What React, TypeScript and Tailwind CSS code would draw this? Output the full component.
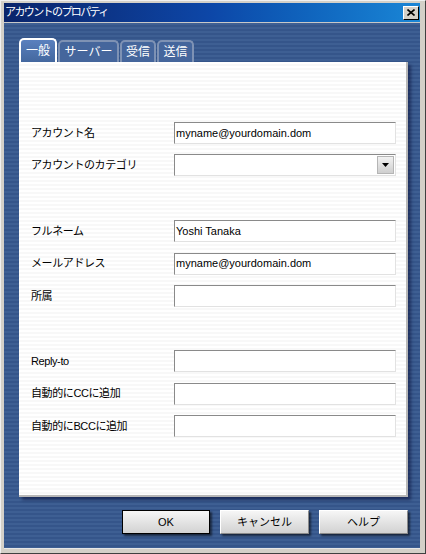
import React from "react";

const jp = "font-['Liberation_Sans','Noto_Sans_CJK_JP',sans-serif]";

function Field({ label, value, select }: { label: string; value?: string; select?: boolean }) {
  return (
    <div className="flex items-center h-[22px]">
      <div className={`w-[143px] text-[11px] tracking-[-0.4px] text-black ${jp}`}>{label}</div>
      <div className="relative w-[222px] h-[22px] bg-white border-t border-l border-t-[#8a8a8a] border-l-[#8a8a8a] border-b border-r border-b-[#e2e2e2] border-r-[#e2e2e2] flex items-center pl-[1px]">
        <span className="font-['Liberation_Sans',sans-serif] text-[11px] text-black">{value}</span>
        {select && (
          <div className="absolute right-[1px] top-[1px] w-[17px] h-[18px] bg-gradient-to-b from-[#f2f2f2] to-[#cfcfcf] border border-[#b5b5b5] flex items-center justify-center">
            <svg width="7" height="4" viewBox="0 0 7 4">
              <path d="M0 0h7L3.5 4z" fill="#000" />
            </svg>
          </div>
        )}
      </div>
    </div>
  );
}

function Btn({ label, def }: { label: string; def?: boolean }) {
  return (
    <div
      className={`h-[24px] flex items-center justify-center bg-gradient-to-b from-[#f6f6f6] to-[#d2d2d2] text-[11px] text-black ${jp} shadow-[2px_2px_2px_rgba(0,0,0,0.55)] ${
        def ? "border border-black" : "border border-t-white border-l-white border-b-[#8a8a8a] border-r-[#8a8a8a]"
      }`}
    >
      {label}
    </div>
  );
}

export default function App() {
  return (
    <div className="w-[426px] h-[554px] bg-[#d4d0c8] border-l border-t border-l-[#f0f0f0] border-t-[#f0f0f0] border-r border-b border-r-[#404040] border-b-[#404040] pl-[3px] pr-[5px] pt-[2px] pb-[4px] flex flex-col">
      <div className="h-[19px] shrink-0 bg-gradient-to-r from-[#0a246a] via-[#0d47a8] to-[#1a86d6] flex items-center justify-between pl-[1px] pr-[1px]">
        <span className={`text-white text-[11px] tracking-[-1.6px] ${jp}`}>アカウントのプロパティ</span>
        <div className="w-[16px] h-[14px] bg-[#d4d0c8] border border-t-white border-l-white border-b-black border-r-black flex items-center justify-center">
          <svg width="8" height="7" viewBox="0 0 8 7">
            <path d="M0.5 0.5l7 6M7.5 0.5l-7 6" stroke="#000" strokeWidth="1.6" />
          </svg>
        </div>
      </div>
      <div className="h-[1px] shrink-0 bg-[#c8c8c8]" />
      <div className="flex-1 flex flex-col pl-[15px] pr-[12px] pt-[15px] bg-[repeating-linear-gradient(180deg,#3e5f93_0px,#3e5f93_2px,#35558a_2px,#35558a_4px)] border-b border-[#e8e8e8]">
        <div className={`flex items-end h-[24px] text-white text-[12px] ${jp}`}>
          <div className="w-[38px] h-[24px] rounded-t-[5px] border-2 border-b-0 border-white bg-gradient-to-b from-[#5a80be] to-[#44689f] flex items-center justify-center">一般</div>
          <div className="ml-[1px] w-[61px] h-[22px] rounded-t-[5px] border-2 border-b-0 border-[#7e92b4] bg-[#45669c] flex items-center justify-center">サーバー</div>
          <div className="ml-[1px] w-[36px] h-[22px] rounded-t-[5px] border-2 border-b-0 border-[#7e92b4] bg-[#45669c] flex items-center justify-center">受信</div>
          <div className="ml-[1px] w-[37px] h-[22px] rounded-t-[5px] border-2 border-b-0 border-[#7e92b4] bg-[#45669c] flex items-center justify-center">送信</div>
        </div>
        <div className="h-[435px] w-[389px] pl-[12px] pt-[60px] bg-[repeating-linear-gradient(180deg,#ffffff_0px,#ffffff_2px,#f8f8f8_2px,#f8f8f8_4px)] border-r-2 border-b-2 border-[#b8b8b8] shadow-[3px_3px_3px_rgba(0,0,40,0.45)] flex flex-col">
          <div className="flex flex-col gap-[10px]">
            <Field label="アカウント名" value="myname@yourdomain.dom" />
            <Field label="アカウントのカテゴリ" select />
          </div>
          <div className="flex flex-col gap-[10.5px] mt-[44px]">
            <Field label="フルネーム" value="Yoshi Tanaka" />
            <Field label="メールアドレス" value="myname@yourdomain.dom" />
            <Field label="所属" />
          </div>
          <div className="flex flex-col gap-[10.5px] mt-[43px]">
            <Field label="Reply-to" />
            <Field label="自動的にCCに追加" />
            <Field label="自動的にBCCに追加" />
          </div>
        </div>
        <div className="flex justify-end gap-[10px] mt-[13px] pr-[0px]">
          <div className="w-[88px]"><Btn label="OK" def /></div>
          <div className="w-[89px]"><Btn label="キャンセル" /></div>
          <div className="w-[89px]"><Btn label="ヘルプ" /></div>
        </div>
      </div>
    </div>
  );
}
